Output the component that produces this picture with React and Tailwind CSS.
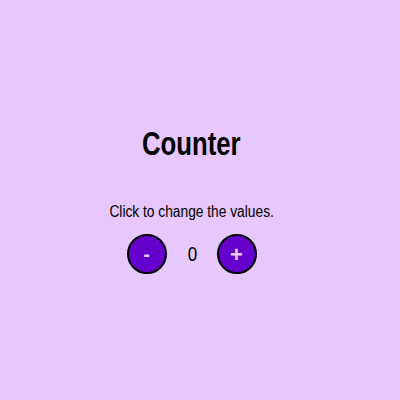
import { useState } from 'react';

const App = () => {
  const [count, setCount] = useState(0);

  return (
    <div
      className="flex h-screen w-full flex-col items-center justify-center bg-[#e6c8ff] pr-[17px] text-black"
      style={{ fontFamily: '"Liberation Sans", Arial, sans-serif' }}
    >
      <h1 className="scale-x-[0.78] text-[33px] font-bold leading-[36px]">Counter</h1>
      <p className="mt-[41px] scale-x-[0.86] text-[16px] leading-[18px]">Click to change the values.</p>
      <div className="mt-[13px] flex items-center gap-[20px]">
        <button
          onClick={() => setCount(count - 1)}
          className="flex h-[40px] w-[40px] items-center justify-center rounded-full border-2 border-black bg-[#6600cc] text-[20px] font-bold text-[#e6c8ff]"
        >
          -
        </button>
        <span className="w-[10px] scale-x-[0.85] text-center text-[20px]">{count}</span>
        <button
          onClick={() => setCount(count + 1)}
          className="flex h-[40px] w-[40px] items-center justify-center rounded-full border-2 border-black bg-[#6600cc] text-[22px] font-bold text-[#e6c8ff]"
        >
          +
        </button>
      </div>
    </div>
  );
};

export default App;
